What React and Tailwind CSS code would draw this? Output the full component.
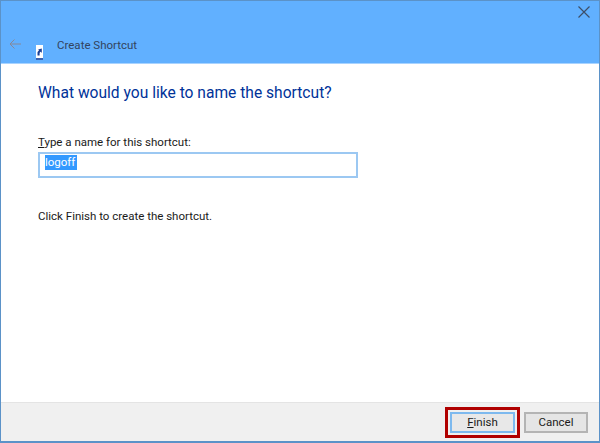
const font = "font-['Roboto',sans-serif]";

const App = () => {
  return (
    <div className={`w-[600px] h-[443px] flex flex-col bg-white border border-b-2 border-[#5b92c8] text-[#1a1a1a] ${font}`}>
      {/* Title bar */}
      <div className="h-[63px] shrink-0 bg-[#61b0ff] border-b border-[#a8d3ff] flex">
        <svg width="12" height="10" viewBox="0 0 12 10" fill="none" stroke="#86889a" strokeWidth="1" className="ml-[8px] mt-[38px]">
          <path d="M12 5H1M5.5 .5 1 5l4.5 4.5" />
        </svg>
        <svg width="7" height="15" viewBox="0 0 7 15" className="ml-[15px] mt-[44px]">
          <rect width="7" height="15" fill="#ffffff" />
          <rect x="0" y="13" width="7" height="2" fill="#3a62b0" />
          <path d="M1.5 10.5V7.5C1.5 6.5 2.2 6 3 5.7L2.2 4.5 5.8 3.5V8L4.8 6.8C4 7.2 3.6 7.6 3.6 8.4V10.5Z" fill="#1c3f94" />
        </svg>
        <span className="ml-[14px] mt-[36px] h-[17px] text-[11.5px] leading-[17px] text-[#33445e]">Create Shortcut</span>
        <svg width="12" height="12" viewBox="0 0 12 12" fill="none" stroke="#3d4f68" strokeWidth="1.2" className="ml-auto mr-[9px] mt-[5px]">
          <path d="M0.5 0.5 11.5 11.5M11.5 0.5 0.5 11.5" />
        </svg>
      </div>

      {/* Wizard body */}
      <div className="flex-1 flex flex-col pl-[37px]">
        <h1 className="mt-[19px] text-[#003399] text-[15.6px] leading-[20px] font-normal">What would you like to name the shortcut?</h1>
        <label className="mt-[31px] text-[11.5px] leading-[16px]">
          <span className="underline">T</span>ype a name for this shortcut:
        </label>
        <div className="mt-[2px] w-[320px] h-[26px] border-2 border-[#9cc8f2] flex items-start pt-[1px] pl-[5px] text-[11.5px]">
          <span className="bg-[#3399ff] text-white leading-[15px] pr-[2px]">logoff</span>
        </div>
        <p className="mt-[30px] text-[11.5px] leading-[16px]">Click Finish to create the shortcut.</p>
      </div>

      {/* Footer buttons */}
      <div className="h-[39px] shrink-0 bg-[#f0f0f0] border-t border-[#e4e4e4] flex items-center justify-end pr-[11px] gap-[4px] pt-[1px]">
        <div className="w-[75px] h-[31px] border-[3px] border-[#b00000] flex items-center justify-center">
          <button className="w-[65px] h-[21px] bg-[#e8e8e8] border-2 border-[#7db9ee] text-[11.5px] leading-none text-[#1a1a1a]">
            <span className="underline">F</span>inish
          </button>
        </div>
        <button className="w-[64px] h-[21px] bg-[#e5e5e5] border-2 border-[#b4b4b4] text-[11.5px] leading-none text-[#1a1a1a]">Cancel</button>
      </div>
    </div>
  );
};

export default App;
